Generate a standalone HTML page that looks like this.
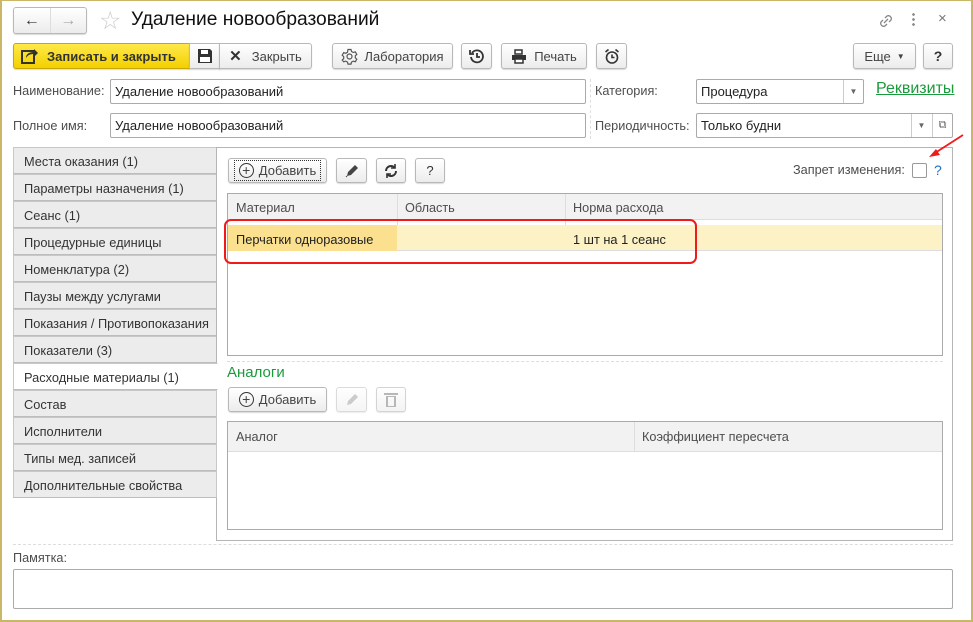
<!DOCTYPE html>
<html><head><meta charset="utf-8"><style>
*{box-sizing:border-box;margin:0;padding:0}
body{width:973px;height:622px;overflow:hidden;background:#fff;font-family:"Liberation Sans",sans-serif;font-size:13px;color:#333;position:relative}
.a{position:absolute}
.frame{left:0;top:0;width:973px;height:622px;border:1px solid #c9b767;border-width:1px 2px 2px 2px}
.btn{position:absolute;border:1px solid #b8b8b8;border-radius:3px;background:linear-gradient(#fff,#ececec);box-shadow:0 1px 1px rgba(0,0,0,.15);display:flex;align-items:center;justify-content:center;color:#444;font-size:13px}
.inp{position:absolute;border:1px solid #aaa;border-radius:2px;background:#fff;padding-left:4px;display:flex;align-items:center;font-size:13px;color:#222}
.lbl{position:absolute;color:#4d4d4d;font-size:12.7px}
.tab{position:absolute;left:13px;width:204px;height:27px;background:#ececec;border:1px solid #c8c8c8;border-bottom-color:#bdbdbd;padding:6px 0 0 10px;color:#333;font-size:12.8px}
.dd{position:absolute;border-left:1px solid #ccc;top:0;bottom:0;width:20px;display:flex;align-items:center;justify-content:center;font-size:8px;color:#666}
</style></head><body>
<div class="a frame"></div>
<div class="btn" style="left:13px;top:7px;width:74px;height:27px;justify-content:flex-start">
 <span style="width:37px;text-align:center;font-size:16px;color:#333;border-right:1px solid #ddd;line-height:25px">&#8592;</span><span style="width:36px;text-align:center;font-size:16px;color:#aaa">&#8594;</span></div>
<div class="a" style="left:99px;top:6px;font-size:25px;color:#ccc">&#9734;</div>
<div class="a" style="left:131px;top:9px;font-size:19.2px;color:#111">Удаление новообразований</div>
<svg class="a" style="left:877px;top:12px" width="18" height="18" viewBox="0 0 18 18" fill="none" stroke="#888" stroke-width="1.3"><path d="M8 6l2-2a3 3 0 014 4l-2 2M10 12l-2 2a3 3 0 01-4-4l2-2M7 11l4-4"/></svg>
<div class="a" style="left:912px;top:12px;width:3px;height:16px;background:radial-gradient(circle,#888 1.2px,transparent 1.5px) 0 0/3px 5px"></div>
<div class="a" style="left:938px;top:10px;font-size:15px;color:#777">&#215;</div>
<div class="btn" style="left:13px;top:43px;width:177px;height:26px;background:linear-gradient(#ffe94a,#f3d000);border-color:#c9a800;justify-content:flex-start;padding-left:7px;font-weight:bold;color:#333;border-radius:3px 0 0 3px">
<svg width="18" height="16" viewBox="0 0 18 16"><rect x="1" y="3" width="12" height="12" fill="none" stroke="#333" stroke-width="2"/><path d="M5 10c0-4 3-6 8-6V1l4 4-4 4V6c-4 0-6 1-8 4z" fill="#333"/></svg><span style="margin-left:8px">Записать и закрыть</span></div>
<div class="btn" style="left:189px;top:43px;width:31px;height:26px;border-radius:0"><svg width="16" height="16" viewBox="0 0 16 16"><path d="M1 1h12l2 2v12H1z" fill="#333"/><rect x="4" y="2" width="7" height="4" fill="#fff"/><rect x="3" y="9" width="10" height="5" fill="#fff"/></svg></div>
<div class="btn" style="left:219px;top:43px;width:93px;height:26px;border-radius:0 3px 3px 0"><b style="font-size:15px;color:#333;margin-right:10px">&#10005;</b>Закрыть</div>
<div class="btn" style="left:332px;top:43px;width:121px;height:26px"><svg width="17" height="17" viewBox="0 0 17 17" style="margin-right:6px" fill="none" stroke="#555" stroke-width="1.2"><circle cx="8.5" cy="8.5" r="2.5"/><path d="M7 1.5h3l.5 2 1.8 1 2-.7 1.5 2.6-1.5 1.4v2l1.5 1.4-1.5 2.6-2-.7-1.8 1-.5 2H7l-.5-2-1.8-1-2 .7L1.2 12l1.5-1.4v-2L1.2 7.2 2.7 4.6l2 .7 1.8-1z"/></svg>Лаборатория</div>
<div class="btn" style="left:461px;top:43px;width:31px;height:26px"><svg width="16" height="16" viewBox="0 0 16 16" fill="none" stroke="#333" stroke-width="1.8"><path d="M3 5a6 6 0 11-1 4"/><path d="M1 2v4h4" /><path d="M8 5v4h3"/></svg></div>
<div class="btn" style="left:501px;top:43px;width:86px;height:26px"><svg width="16" height="15" viewBox="0 0 16 15" style="margin-right:7px"><rect x="4" y="1" width="7" height="4" fill="none" stroke="#333" stroke-width="1.5"/><rect x="1" y="6" width="14" height="5" fill="#333"/><rect x="4" y="10" width="8" height="4" fill="#fff" stroke="#333" stroke-width="1.5"/></svg>Печать</div>
<div class="btn" style="left:596px;top:43px;width:31px;height:26px"><svg width="16" height="17" viewBox="0 0 16 17" fill="none" stroke="#333" stroke-width="1.6"><circle cx="8" cy="9.5" r="5.5"/><path d="M8 6.5v3h2.5M1.5 4l3-2.5M14.5 4l-3-2.5"/></svg></div>
<div class="btn" style="left:853px;top:43px;width:63px;height:26px">Еще <span style="font-size:8px;margin-left:6px">&#9660;</span></div>
<div class="btn" style="left:923px;top:43px;width:30px;height:26px;font-weight:bold;color:#333;font-size:14px">?</div>
<div class="lbl" style="left:13px;top:84px">Наименование:</div>
<div class="inp" style="left:110px;top:79px;width:476px;height:25px">Удаление новообразований</div>
<div class="lbl" style="left:13px;top:119px">Полное имя:</div>
<div class="inp" style="left:110px;top:113px;width:476px;height:25px">Удаление новообразований</div>
<div class="a" style="left:590px;top:79px;height:60px;border-left:1px dashed #ddd"></div>
<div class="lbl" style="left:595px;top:84px">Категория:</div>
<div class="inp" style="left:696px;top:79px;width:168px;height:25px">Процедура<div class="dd" style="right:0">&#9660;</div></div>
<div class="a" style="left:876px;top:80px;font-size:16px;color:#1a9a3c;text-decoration:underline">Реквизиты</div>
<div class="lbl" style="left:595px;top:119px">Периодичность:</div>
<div class="inp" style="left:696px;top:113px;width:257px;height:25px">Только будни<div class="dd" style="right:21px">&#9660;</div><div class="dd" style="right:0;font-size:11px">&#10697;</div></div>
<div class="tab" style="top:147px">Места оказания (1)</div>
<div class="tab" style="top:174px">Параметры назначения (1)</div>
<div class="tab" style="top:201px">Сеанс (1)</div>
<div class="tab" style="top:228px">Процедурные единицы</div>
<div class="tab" style="top:255px">Номенклатура (2)</div>
<div class="tab" style="top:282px">Паузы между услугами</div>
<div class="tab" style="top:309px">Показания / Противопоказания</div>
<div class="tab" style="top:336px">Показатели (3)</div>
<div class="a" style="left:216px;top:147px;width:737px;height:394px;border:1px solid #b5b5b5;background:#fff"></div>
<div class="tab" style="top:363px;background:#fff;border-right-color:#fff;width:205px">Расходные материалы (1)</div>
<div class="tab" style="top:390px">Состав</div>
<div class="tab" style="top:417px">Исполнители</div>
<div class="tab" style="top:444px">Типы мед. записей</div>
<div class="tab" style="top:471px">Дополнительные свойства</div>
<div class="btn" style="left:228px;top:158px;width:99px;height:25px"><span style="border:1px dotted #333;padding:2px 4px;display:flex;align-items:center"><span style="display:inline-block;width:15px;height:15px;border:1.5px solid #333;border-radius:50%;text-align:center;line-height:12px;font-size:14px;margin-right:5px">+</span>Добавить</span></div>
<div class="btn" style="left:336px;top:158px;width:31px;height:25px"><svg width="16" height="16" viewBox="0 0 16 16"><path d="M3 13l1-4 7-7 3 3-7 7z" fill="#444"/><path d="M2 14l1-1" stroke="#444"/></svg></div>
<div class="btn" style="left:376px;top:158px;width:30px;height:25px"><svg width="16" height="16" viewBox="0 0 16 16" fill="none" stroke="#333" stroke-width="2"><path d="M3 8a5 5 0 019-3M13 8a5 5 0 01-9 3"/><path d="M12 1v4H8M4 15v-4h4" stroke-width="1.6"/></svg></div>
<div class="btn" style="left:415px;top:158px;width:30px;height:25px;color:#333">?</div>
<div class="lbl" style="left:793px;top:163px">Запрет изменения:</div>
<div class="a" style="left:912px;top:163px;width:15px;height:15px;border:1px solid #999;border-radius:2px"></div>
<div class="a" style="left:934px;top:162px;color:#1f6fc5;font-size:14px">?</div>
<div class="a" style="left:227px;top:193px;width:716px;height:163px;border:1px solid #aaa"></div>
<div class="a" style="left:228px;top:194px;width:714px;height:26px;background:#f2f2f2;border-bottom:1px solid #ddd"></div>
<div class="a" style="left:397px;top:194px;height:57px;border-left:1px solid #ddd"></div>
<div class="a" style="left:565px;top:194px;height:57px;border-left:1px solid #ddd"></div>
<div class="lbl" style="left:236px;top:201px">Материал</div>
<div class="lbl" style="left:405px;top:201px">Область</div>
<div class="lbl" style="left:573px;top:201px">Норма расхода</div>
<div class="a" style="left:228px;top:225px;width:714px;height:26px;background:#fdf2c5;border-bottom:1px solid #ddd"></div>
<div class="a" style="left:228px;top:225px;width:169px;height:26px;background:#fbe18f"></div>
<div class="a" style="left:236px;top:232px;color:#222;font-size:12.8px">Перчатки одноразовые</div>
<div class="a" style="left:573px;top:232px;color:#222;font-size:12.8px">1 шт на 1 сеанс</div>
<div class="a" style="left:224px;top:219px;width:473px;height:45px;border:2px solid #f01a1a;border-radius:7px"></div>
<div class="a" style="left:227px;top:361px;width:716px;border-top:1px dashed #ddd"></div>
<div class="a" style="left:227px;top:364px;font-size:15px;color:#1a9a3c">Аналоги</div>
<div class="btn" style="left:228px;top:387px;width:99px;height:25px"><span style="display:inline-block;width:15px;height:15px;border:1.5px solid #333;border-radius:50%;text-align:center;line-height:12px;font-size:14px;margin-right:5px">+</span>Добавить</div>
<div class="btn" style="left:336px;top:387px;width:31px;height:25px;opacity:.5"><svg width="16" height="16" viewBox="0 0 16 16"><path d="M3 13l1-4 7-7 3 3-7 7z" fill="#999"/></svg></div>
<div class="btn" style="left:376px;top:387px;width:30px;height:25px;opacity:.6"><svg width="14" height="16" viewBox="0 0 14 16"><rect x="0" y="1" width="14" height="2" fill="#888"/><path d="M2 4h10v11H2z M4 5v9h6V5z" fill="#888" fill-rule="evenodd"/></svg></div>
<div class="a" style="left:227px;top:421px;width:716px;height:109px;border:1px solid #aaa"></div>
<div class="a" style="left:228px;top:422px;width:714px;height:30px;background:#f2f2f2;border-bottom:1px solid #ddd"></div>
<div class="a" style="left:634px;top:422px;height:30px;border-left:1px solid #ddd"></div>
<div class="lbl" style="left:236px;top:430px">Аналог</div>
<div class="lbl" style="left:642px;top:430px">Коэффициент пересчета</div>
<div class="a" style="left:13px;top:544px;width:940px;border-top:1px dashed #ddd"></div>
<div class="lbl" style="left:13px;top:551px">Памятка:</div>
<div class="a" style="left:13px;top:569px;width:940px;height:40px;border:1px solid #aaa;border-radius:2px"></div>
<svg class="a" style="left:925px;top:132px" width="42" height="30" viewBox="0 0 42 30"><path d="M38 3L10 21" stroke="#f01a1a" stroke-width="1.8"/><path d="M4 25l11-2-4-6z" fill="#f01a1a"/></svg>
</body></html>
